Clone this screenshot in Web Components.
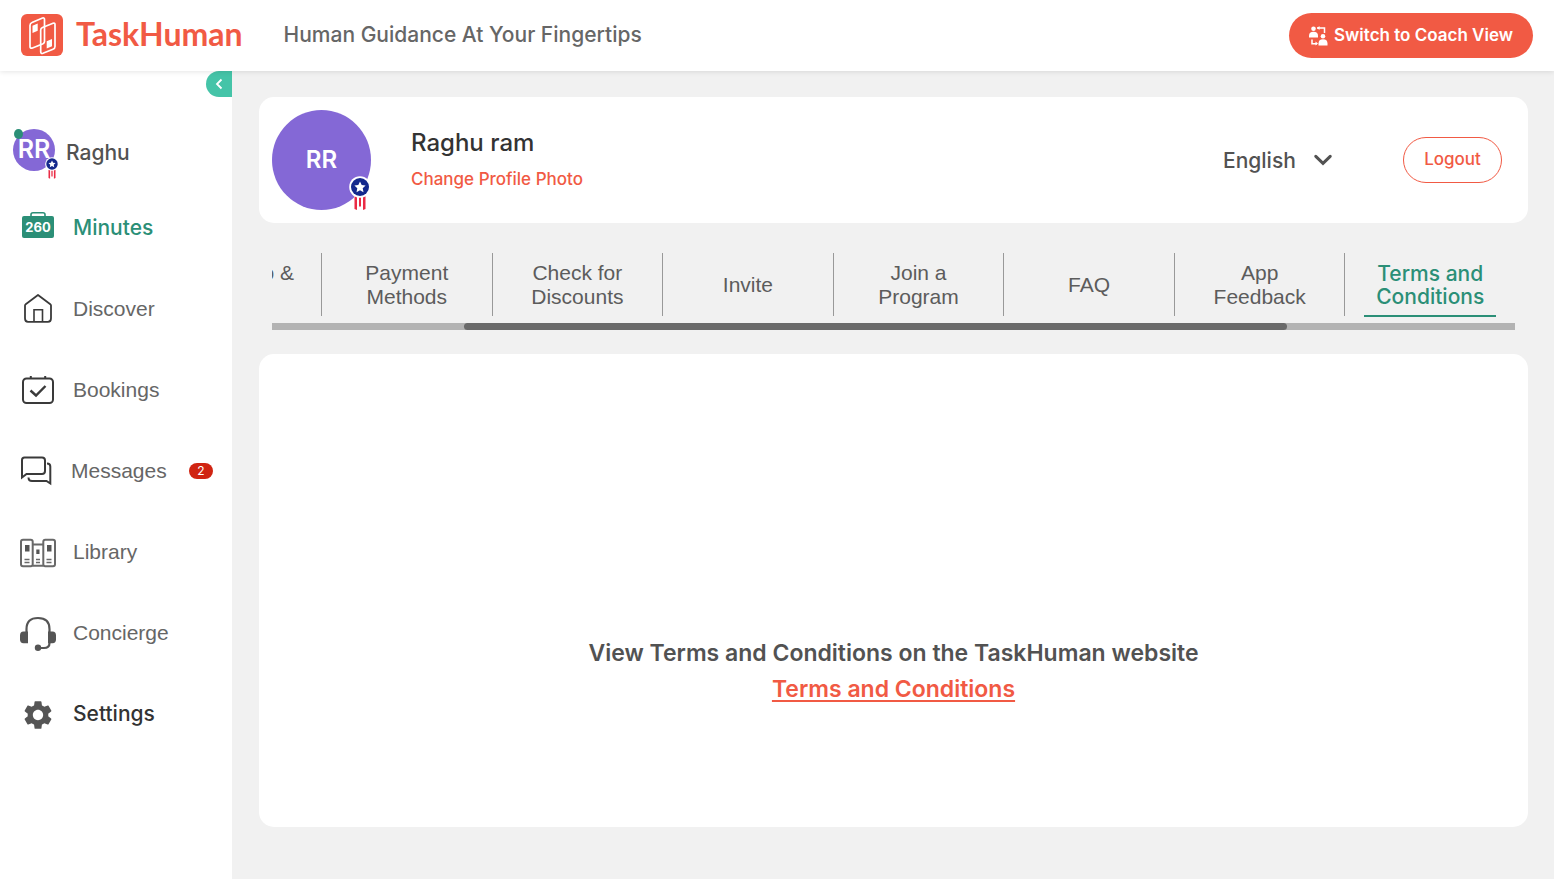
<!DOCTYPE html>
<html lang="en">
<head>
<meta charset="utf-8">
<meta name="viewport" content="width=device-width, initial-scale=1">
<title>TaskHuman</title>
<style>
  body { margin: 0; background: #f1f1f1; font-family: Inter, "Liberation Sans", sans-serif; color: #525252; }
</style>
</head>
<body>
<th-app></th-app>
<script>
const define = (name, html, setup) => customElements.define(name, class extends HTMLElement {
  connectedCallback() {
    if (this.shadowRoot) return;
    const root = this.attachShadow({ mode: 'open' });
    const t = document.createElement('template');
    t.innerHTML = '<style>*{box-sizing:border-box}svg{display:block}button,select{font:inherit;cursor:pointer}</style>' + html;
    root.append(t.content.cloneNode(true));
    if (setup) setup(this, root);
  }
});

const icons = {
  minutes: `<svg width="40" height="36" viewBox="0 0 40 36"><path d="M13 6.500V4.500Q13 2.700 15 2.700H25Q27 2.700 27 4.500V6.500" fill="none" stroke="#2b8f77" stroke-width="1.600"/><rect x="4" y="6" width="32" height="22" rx="2" fill="#2b8f77"/><text x="20" y="22" text-anchor="middle" font-family="Inter, sans-serif" font-size="13" font-weight="700" fill="#fff">260</text></svg>`,
  discover: `<svg width="40" height="32" viewBox="0 0 40 32" fill="none" stroke="#3a3a3a" stroke-width="1.800" stroke-linejoin="round"><path d="M20 2 32.300 11.200Q33 11.700 33 12.500V25.200Q33 28.800 30 28.800H10Q7 28.800 7 25.200V12.500Q7 11.700 7.700 11.200Z"/><path d="M16 28.500V16.800H24.500V28.500" stroke-width="1.600" stroke-linejoin="miter"/></svg>`,
  bookings: `<svg width="40" height="32" viewBox="0 0 40 32" fill="none" stroke="#3a3a3a" stroke-width="2"><rect x="5" y="4.500" width="30" height="24.500" rx="3.500"/><path d="M12.800 4V2M27.200 4V2"/><path d="M12.500 16.500 18 21.500 27.500 12" stroke-width="2.400"/></svg>`,
  messages: `<svg width="38" height="32" viewBox="0 0 38 32" fill="none" stroke="#3a3a3a" stroke-width="2"><path d="M4 22.500V5Q4 2.500 6.500 2.500H24Q27 2.500 27 5.500V16Q27 19 24 19H8.500Z"/><path d="M29 8.500Q32.300 8.500 32.300 11.500V28.500L28.500 26H14Q10.500 26 10.500 22.500"/></svg>`,
  library: `<svg width="40" height="32" viewBox="0 0 40 32" fill="none" stroke="#696969" stroke-width="2"><rect x="3" y="3.800" width="11.700" height="26.500" rx="2"/><rect x="25.300" y="3.800" width="11.700" height="26.500" rx="2"/><path d="M14.700 8.500H25.300M14.700 29.800H25.300"/><path d="M6.500 23.500h5M6.500 26.500h5M18 23.500h4M18 26.500h4M28.500 23.500h5M28.500 26.500h5" stroke-width="1.300"/><path d="M7 9h4.500v6.500H7zM18.300 13.500h3.200v4.500h-3.200zM29 9h4.500v6.500H29z" fill="#555" stroke="none"/></svg>`,
  concierge: `<svg width="40" height="36" viewBox="0 0 40 36" fill="none" stroke="#555" stroke-width="2.200"><path d="M8.500 18V14.200Q8.500 3 20 3T31.500 14.200V18"/><path d="M31.500 28Q31.500 33 26 33H20"/><circle cx="20" cy="32.800" r="3.200" fill="#555" stroke="none"/><path d="M10 16.500V28.200H5.500Q2 28.200 2 24.500V20.500Q2 16.500 5.500 16.500ZM30 16.500V28.200H34.500Q38 28.200 38 24.500V20.500Q38 16.500 34.500 16.500Z" fill="#555" stroke="none"/></svg>`,
  settings: `<svg width="40" height="36" viewBox="0 0 40 36"><path transform="translate(2.800 1.800) scale(1.433)" fill="#555" d="M19.140 12.940c.040-.3.060-.610.060-.940 0-.320-.020-.640-.070-.940l2.030-1.580c.180-.140.230-.410.120-.610l-1.920-3.320c-.120-.220-.370-.290-.590-.220l-2.390.960c-.5-.380-1.030-.7-1.620-.940l-.360-2.540c-.040-.240-.240-.410-.480-.410h-3.840c-.240 0-.430.170-.470.410l-.360 2.540c-.590.240-1.130.570-1.620.940l-2.390-.960c-.220-.080-.470 0-.590.220L2.740 8.870c-.120.210-.080.470.120.610l2.030 1.580c-.050.3-.090.630-.090.940s.020.640.070.940l-2.030 1.580c-.180.140-.230.410-.120.610l1.920 3.320c.120.220.370.290.590.220l2.390-.960c.5.380 1.030.7 1.620.940l.360 2.540c.050.240.240.410.480.410h3.840c.240 0 .440-.170.470-.410l.360-2.540c.590-.240 1.130-.560 1.620-.940l2.390.960c.220.080.470 0 .590-.220l1.920-3.320c.120-.220.070-.470-.120-.610l-2.010-1.580zM12 15.600c-1.980 0-3.600-1.620-3.600-3.600s1.620-3.600 3.600-3.600 3.600 1.620 3.600 3.600-1.620 3.600-3.600 3.600z"/></svg>`
};

define('th-logo', `<style>
  :host{display:block}
  a{display:flex;align-items:center;gap:13px;color:#f15a44;text-decoration:none;font:700 32px/42px Lato,sans-serif}
  span{padding-bottom:2px}
</style>
<a href="#home"><svg width="42" height="42" viewBox="0 0 42 42"><rect width="42" height="42" rx="6" fill="#f15a44"/>
<g fill="none" stroke="#fff" stroke-width="1.700"><path d="M11 8.500 21.500 4Q23.500 3.500 23.500 5.500V27.500Q23.500 29 22 29.700L11.500 34Q9 34.800 9 32.500V11.500Q9 9.300 11 8.500Z"/><path d="M21.500 13.500 32 9.200Q34 8.700 34 10.500V32.500Q34 34.500 32 35.200L22 39.300Q19.700 40 19.700 37.800V16Q19.700 14.200 21.500 13.500Z"/></g><path d="M11.500 11.700 16.700 9.500V16.700L11.500 19ZM25.700 27.200 31 25V32.300L25.700 34.500Z" fill="#fff"/></svg><span>TaskHuman</span></a>`);

define('th-header', `<style>
  :host{display:block;position:relative;z-index:1}
  header{display:flex;align-items:center;height:71px;padding:0 21px;background:#fff;box-shadow:0 1px 5px rgba(0,0,0,.1)}
  th-logo{margin-bottom:2px}
  p{margin:0 auto 2px 41px;font-size:21px;font-weight:500;color:#666}
  button{display:flex;align-items:center;gap:6px;height:45px;padding:0 20px;border:0;border-radius:23px;background:#f15a44;color:#fff;font-size:17px;font-weight:600}
  button span{padding-bottom:2px}
</style>
<header><th-logo></th-logo><p>Human Guidance At Your Fingertips</p>
<button type="button"><svg width="19" height="20" viewBox="0 0 19 20" fill="#fff"><circle cx="4.500" cy="2.700" r="2.300"/><path d="M0 11.500V9.500Q0 5.700 4.500 5.700T9 9.500V11.500Z"/><circle cx="14" cy="10.200" r="2.300"/><path d="M9.500 19.500V17.500Q9.500 13.200 14 13.200T18.500 17.500V19.500Z"/><path d="M8 2H15.500V7M3 13.500V17.700H8" fill="none" stroke="#fff" stroke-width="1.500"/><path d="M10.500 0V4L8 2ZM6.500 15.500V19.500L9 17.600Z"/></svg><span>Switch to Coach View</span></button></header>`);

define('th-medal', `<style>:host{display:block}svg{width:100%;height:auto}</style>
<svg viewBox="0 0 22 34"><path d="M5 20H17V34H5Z" fill="#fff"/><path d="M5.500 20H8V34L5.500 33ZM10 21H12V30.500H10ZM14 20H16.500V33L14 34Z" fill="#ea2b45"/><circle cx="11" cy="11" r="10.800" fill="#fff"/><circle cx="11" cy="11" r="9" fill="#14288c"/><path d="m11 5.500 1.700 3.600 3.900.5-2.900 2.700.8 3.900-3.500-1.900-3.500 1.900.8-3.900-2.900-2.700 3.900-.5Z" fill="#fff"/></svg>`);

define('th-nav-item', `<style>
  :host{display:block}
  a{display:flex;align-items:center;gap:15px;height:81px;padding:0 19px 0 18px;color:#666;text-decoration:none;font:400 21px/24px "Liberation Sans",Arial,sans-serif}
  :host([tone]) a{font-family:Inter,sans-serif;font-weight:500}
  :host([tone=green]) a{color:#2b8f77}
  :host([tone=dark]) a{color:#333}
  b{margin-left:auto;width:24px;border-radius:8px;background:#d02412;color:#fff;font:400 12px/16px Inter,sans-serif;text-align:center}
</style><a><span class="icon"></span><span><slot></slot></span></a>`, (el, root) => {
  const a = root.querySelector('a');
  a.href = '#' + el.getAttribute('icon');
  root.querySelector('.icon').innerHTML = icons[el.getAttribute('icon')];
  if (el.getAttribute('count')) {
    const b = document.createElement('b');
    b.textContent = el.getAttribute('count');
    a.append(b);
  }
});

define('th-sidebar', `<style>
  :host{display:block;position:relative;background:#fff}
  .fold{position:absolute;top:0;right:0;display:grid;place-items:center;width:26px;height:26px;padding:0;border:0;border-radius:13px 0 0 13px;background:#45c4a8}
  .me{display:flex;align-items:center;gap:11px;height:50px;margin:56px 0 10px 13px;color:#525252;text-decoration:none;font-size:21px;font-weight:500}
  .pic{position:relative;display:grid;place-items:center;width:42px;height:42px;margin-bottom:4px;padding-bottom:2px;border-radius:50%;background:#8468d6;color:#fff;font-size:25px;font-weight:600}
  .pic::before{content:"";position:absolute;left:1px;top:0;width:9px;height:10px;border-radius:50%;background:#2b8f77}
  th-medal{position:absolute;right:-4px;top:28px;width:14px}
</style>
<button class="fold" type="button" aria-label="Collapse menu"><svg width="10" height="12" viewBox="0 0 10 12"><path d="M7.500 1.500 3 6l4.500 4.500" fill="none" stroke="#fff" stroke-width="1.800"/></svg></button>
<a class="me" href="#profile"><span class="pic">RR<th-medal></th-medal></span><span>Raghu</span></a>
<nav aria-label="Main">
<th-nav-item icon="minutes" tone="green">Minutes</th-nav-item>
<th-nav-item icon="discover">Discover</th-nav-item>
<th-nav-item icon="bookings">Bookings</th-nav-item>
<th-nav-item icon="messages" count="2">Messages</th-nav-item>
<th-nav-item icon="library">Library</th-nav-item>
<th-nav-item icon="concierge">Concierge</th-nav-item>
<th-nav-item icon="settings" tone="dark">Settings</th-nav-item>
</nav>`);

define('th-profile', `<style>
  :host{display:block}
  section{display:flex;align-items:center;padding:13px 26px 13px 13px;border-radius:15px;background:#fff}
  .pic{position:relative;display:grid;place-items:center;width:99px;height:100px;padding-bottom:2px;border-radius:50%;background:#8468d6;color:#fff;font-size:24px;font-weight:600}
  th-medal{position:absolute;right:0;bottom:0;width:22px}
  .who{margin:0 auto 0 40px;padding-bottom:2px}
  h1{margin:0;color:#333;font-size:24px;font-weight:500;line-height:40px}
  .who a{display:block;color:#f15a44;font-size:17px;font-weight:500;line-height:32px;text-decoration:none}
  .lang{position:relative;display:flex;align-items:center;margin-right:71px}
  select{appearance:none;width:109px;padding:0;border:0;background:none;color:#525252;font-size:21px;font-weight:500}
  .lang svg{position:absolute;right:0;pointer-events:none}
  button{width:99px;height:46px;padding:0 0 2px;border:1px solid #f15a44;border-radius:23px;background:#fff;color:#f15a44;font-size:17px;font-weight:500}
</style>
<section><div class="pic">RR<th-medal></th-medal></div>
<div class="who"><h1>Raghu ram</h1><a href="#photo">Change Profile Photo</a></div>
<label class="lang"><select aria-label="Language"><option>English</option></select><svg width="18" height="12" viewBox="0 0 18 12"><path d="M1.800 2.300 9 9.300l7.200-7" fill="none" stroke="#525252" stroke-width="3" stroke-linecap="round"/></svg></label>
<button type="button">Logout</button></section>`);

define('th-tab', `<style>
  :host{display:block;flex:1 1 0;min-width:0}
  button{display:grid;place-items:center;width:100%;height:63px;padding:0 19px;border:0;border-left:1px solid #999;background:none;color:#5c5c5c;font:400 21px/24px "Liberation Sans",Arial,sans-serif}
  span{display:grid;place-content:center;width:100%;height:63px}
  :host([active]) button{color:#2b8f77;font-family:Inter,sans-serif;font-weight:500;line-height:23px}
  :host([active]) span{height:64px;padding-top:2px;border-bottom:2px solid #2b8f77}
  :host([clipped]){display:flex;justify-content:flex-end;flex:0 0 49px;overflow:hidden}
  :host([clipped]) button{flex:none;width:auto;border:0;padding:0 27px 0 0}
</style><button type="button" role="tab"><span><slot></slot></span></button>`);

define('th-tabs', `<style>
  :host{display:block;margin:30px 13px 24px}
  .row{display:flex;height:70px}
  .track{display:grid;grid-template-columns:192fr 823fr 228fr;height:7px;background:#b3b3b3}
  .thumb{grid-column:2;border-radius:4px;background:#6a6a6a}
</style><div class="row" role="tablist"><slot></slot></div><div class="track"><div class="thumb"></div></div>`);

define('th-terms', `<style>
  :host{display:flex;flex:1;flex-direction:column;align-items:center;justify-content:flex-end;padding:60px 20px 120px;border-radius:15px;background:#fff;font-size:23px;font-weight:600;line-height:36px;text-align:center}
  p{margin:0}
  a{color:#f15a44;text-decoration-thickness:2px;text-underline-offset:3px}
</style><p>View Terms and Conditions on the TaskHuman website</p><a href="#terms">Terms and Conditions</a>`);

define('th-app', `<style>
  :host{display:flex;flex-direction:column;min-height:100vh}
  .body{display:flex;flex:1}
  th-sidebar{flex:0 0 232px}
  main{display:flex;flex:1;flex-direction:column;min-width:0;padding:26px 26px 52px 27px}
</style>
<th-header></th-header>
<div class="body"><th-sidebar></th-sidebar>
<main><th-profile></th-profile>
<th-tabs>
<th-tab clipped>o&nbsp;&amp;<br>&nbsp;</th-tab>
<th-tab>Payment<br>Methods</th-tab>
<th-tab>Check for<br>Discounts</th-tab>
<th-tab>Invite</th-tab>
<th-tab>Join a<br>Program</th-tab>
<th-tab>FAQ</th-tab>
<th-tab>App<br>Feedback</th-tab>
<th-tab active>Terms and<br>Conditions</th-tab>
</th-tabs>
<th-terms></th-terms></main></div>`);
</script>
</body>
</html>
